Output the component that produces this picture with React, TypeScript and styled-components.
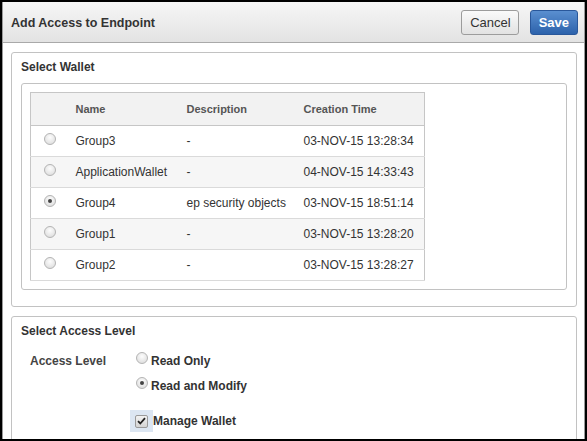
import React from "react";
import styled, { createGlobalStyle } from "styled-components";

const Global = createGlobalStyle`
  html, body { margin: 0; padding: 0; background: #000; }
  body { font-family: "Liberation Sans", Arial, sans-serif; }
  * { box-sizing: border-box; }
`;

const Frame = styled.div`
  width: 587px;
  height: 441px;
  background: #000;
  padding: 2px 2px 2px 2px;
  overflow: hidden;
`;

const Dialog = styled.div`
  height: 100%;
  background: #fff;
  border: 1px solid #9a9a9a;
  border-top: none;
  border-bottom: none;
  overflow: hidden;
  display: flex;
  flex-direction: column;
`;

const Header = styled.div`
  height: 41px;
  flex: none;
  display: flex;
  align-items: center;
  justify-content: space-between;
  padding: 0 6px 0 8px;
  background: linear-gradient(#f6f6f6, #e3e3e3);
  border-bottom: 1px solid #a9a9a9;
`;

const Title = styled.div`
  font-size: 12.5px;
  font-weight: bold;
  color: #333;
  padding-top: 1px;
`;

const Actions = styled.div`
  display: flex;
  gap: 11px;
`;

const Button = styled.button<{ $primary?: boolean }>`
  height: 25px;
  padding: ${(p) => (p.$primary ? "0 8px" : "0 7px 0 8px")};
  border-radius: 3px;
  font-family: "Liberation Sans", Arial, sans-serif;
  font-size: 13px;
  font-weight: ${(p) => (p.$primary ? "bold" : "normal")};
  color: ${(p) => (p.$primary ? "#fff" : "#333")};
  border: 1px solid ${(p) => (p.$primary ? "#29579a" : "#9c9c9c")};
  background: ${(p) =>
    p.$primary
      ? "linear-gradient(#5a8fd0, #2c62ab)"
      : "linear-gradient(#fafafa, #e2e2e2)"};
  cursor: pointer;
`;

const Body = styled.div`
  padding: 9px 7px 0 8px;
  display: flex;
  flex-direction: column;
  gap: 9px;
`;

const Section = styled.div<{ $open?: boolean }>`
  border: 1px solid #c2c2c2;
  border-radius: 3px;
  padding: 7px 9px ${(p) => (p.$open ? "40px" : "16px")} 9px;
  background: #fff;
`;

const SectionTitle = styled.div`
  font-size: 12px;
  font-weight: bold;
  color: #333;
  height: 15px;
  line-height: 15px;
  margin-bottom: 8px;
`;

const InnerPanel = styled.div`
  border: 1px solid #c2c2c2;
  border-radius: 3px;
  padding: 8px;
  height: 207px;
`;

const Table = styled.table`
  border-collapse: collapse;
  table-layout: fixed;
  width: 395px;
  border: 1px solid #c6c6c6;
  font-size: 12px;
  color: #333;
`;

const Th = styled.th<{ $w: number }>`
  width: ${(p) => p.$w}px;
  height: 33px;
  text-align: left;
  font-size: 11px;
  font-weight: bold;
  color: #555;
  padding: 0 0 0 8px;
  background: #f2f2f2;
  border-bottom: 1px solid #c6c6c6;
`;

const Tr = styled.tr<{ $alt?: boolean }>`
  background: ${(p) => (p.$alt ? "#f6f6f6" : "#fff")};
  border-bottom: 1px solid #dadada;
  height: 31px;
`;

const Td = styled.td`
  padding: 0 0 0 8px;
  white-space: nowrap;
  vertical-align: middle;
`;

const RadioCell = styled.td`
  padding: 0 0 0 13px;
  vertical-align: middle;
`;

const RadioDot = styled.span<{ $on?: boolean }>`
  display: inline-block;
  flex: none;
  width: 12px;
  height: 12px;
  border-radius: 50%;
  border: 1px solid #b4b4b4;
  background: radial-gradient(circle at 50% 35%, #fdfdfd, #d8d8d8);
  position: relative;
  vertical-align: middle;
  margin-top: -6px;
  &::after {
    content: "";
    display: ${(p) => (p.$on ? "block" : "none")};
    position: absolute;
    left: 3px;
    top: 3px;
    width: 4px;
    height: 4px;
    border-radius: 50%;
    background: #444;
  }
`;

const FieldRow = styled.div`
  display: grid;
  grid-template-columns: 106px 1fr;
  padding-left: 9px;
  margin-top: 14px;
`;

const FieldLabel = styled.div`
  font-size: 12px;
  font-weight: bold;
  color: #444;
  padding-top: 1px;
`;

const Options = styled.div`
  display: flex;
  flex-direction: column;
  gap: 11px;
  padding-top: 1px;
`;

const Option = styled.label`
  display: flex;
  align-items: center;
  gap: 3px;
  font-size: 12px;
  font-weight: bold;
  color: #333;
  height: 14px;
`;

const CheckWrap = styled.label`
  display: flex;
  align-items: center;
  gap: 0;
  margin-left: -6px;
  margin-top: 6px;
  font-size: 12px;
  font-weight: bold;
  color: #333;
`;

const CheckHalo = styled.span`
  width: 23px;
  height: 22px;
  display: flex;
  align-items: center;
  justify-content: center;
  background: #dce6f2;
`;

const CheckBox = styled.span`
  width: 13px;
  height: 13px;
  border: 1px solid #9a9a9a;
  border-radius: 2px;
  background: linear-gradient(#f2f2f2, #d4d4d4);
  display: flex;
  align-items: center;
  justify-content: center;
`;

const wallets = [
  { name: "Group3", desc: "-", time: "03-NOV-15 13:28:34" },
  { name: "ApplicationWallet", desc: "-", time: "04-NOV-15 14:33:43" },
  { name: "Group4", desc: "ep security objects", time: "03-NOV-15 18:51:14", on: true },
  { name: "Group1", desc: "-", time: "03-NOV-15 13:28:20" },
  { name: "Group2", desc: "-", time: "03-NOV-15 13:28:27" },
];

export default function App() {
  return (
    <>
      <Global />
      <Frame>
        <Dialog>
          <Header>
            <Title>Add Access to Endpoint</Title>
            <Actions>
              <Button>Cancel</Button>
              <Button $primary>Save</Button>
            </Actions>
          </Header>
          <Body>
            <Section>
              <SectionTitle>Select Wallet</SectionTitle>
              <InnerPanel>
                <Table>
                  <thead>
                    <tr>
                      <Th $w={37} />
                      <Th $w={111}>Name</Th>
                      <Th $w={117}>Description</Th>
                      <Th $w={129}>Creation Time</Th>
                    </tr>
                  </thead>
                  <tbody>
                    {wallets.map((w, i) => (
                      <Tr key={w.name} $alt={i % 2 === 1}>
                        <RadioCell>
                          <RadioDot $on={w.on} />
                        </RadioCell>
                        <Td>{w.name}</Td>
                        <Td>{w.desc}</Td>
                        <Td>{w.time}</Td>
                      </Tr>
                    ))}
                  </tbody>
                </Table>
              </InnerPanel>
            </Section>
            <Section $open>
              <SectionTitle>Select Access Level</SectionTitle>
              <FieldRow>
                <FieldLabel>Access Level</FieldLabel>
                <Options>
                  <Option>
                    <RadioDot />
                    Read Only
                  </Option>
                  <Option>
                    <RadioDot $on />
                    Read and Modify
                  </Option>
                  <CheckWrap>
                    <CheckHalo>
                      <CheckBox>
                        <svg width="9" height="8" viewBox="0 0 9 8">
                          <path d="M1 4.2 L3.3 6.5 L8 1.2" stroke="#222" strokeWidth="1.8" fill="none" />
                        </svg>
                      </CheckBox>
                    </CheckHalo>
                    Manage Wallet
                  </CheckWrap>
                </Options>
              </FieldRow>
            </Section>
          </Body>
        </Dialog>
      </Frame>
    </>
  );
}
